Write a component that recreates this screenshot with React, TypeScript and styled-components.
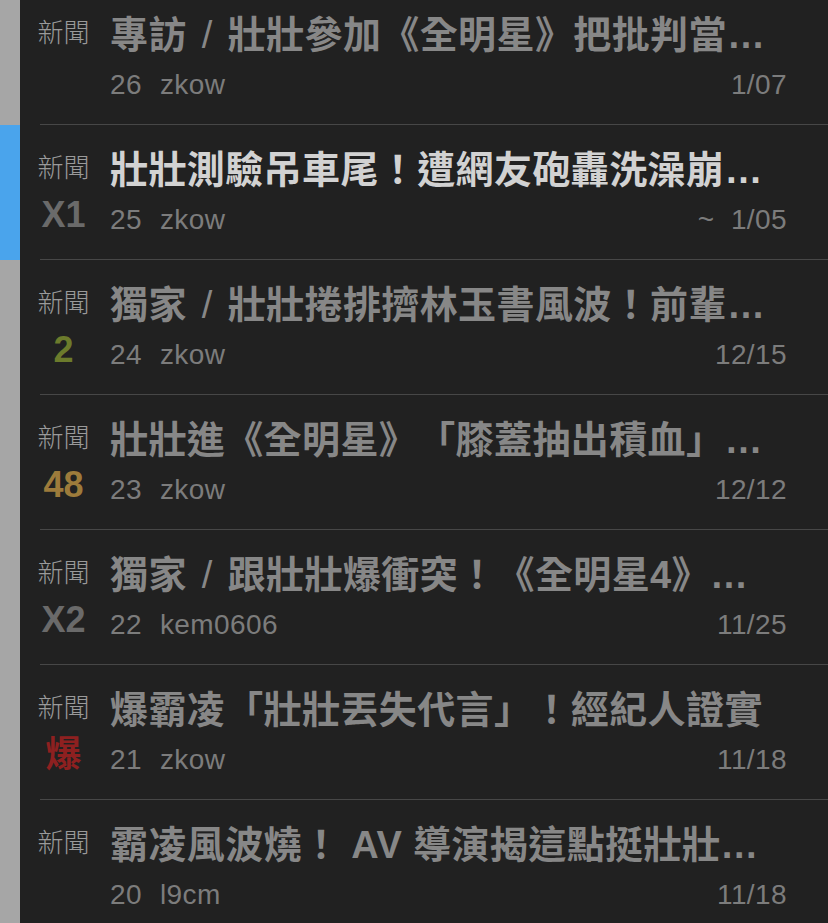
import React from "react";
import styled, { createGlobalStyle } from "styled-components";

const GlobalStyle = createGlobalStyle`
  html, body {
    margin: 0;
    padding: 0;
    background: #212121;
    overflow: hidden;
    height: 100%;
  }
`;

type Tone = "gray" | "green" | "gold" | "red";

interface Post {
  title: string;
  num: string;
  author: string;
  date: string;
  badge?: { text: string; tone: Tone };
  active?: boolean;
  bright?: boolean;
}

const posts: Post[] = [
  { title: "專訪 / 壯壯參加《全明星》把批判當…", num: "26", author: "zkow", date: "1/07" },
  {
    title: "壯壯測驗吊車尾！遭網友砲轟洗澡崩…",
    num: "25",
    author: "zkow",
    date: "~  1/05",
    badge: { text: "X1", tone: "gray" },
    active: true,
    bright: true,
  },
  { title: "獨家 / 壯壯捲排擠林玉書風波！前輩…", num: "24", author: "zkow", date: "12/15", badge: { text: "2", tone: "green" } },
  { title: "壯壯進《全明星》「膝蓋抽出積血」…", num: "23", author: "zkow", date: "12/12", badge: { text: "48", tone: "gold" } },
  { title: "獨家 / 跟壯壯爆衝突！《全明星4》…", num: "22", author: "kem0606", date: "11/25", badge: { text: "X2", tone: "gray" } },
  { title: "爆霸凌「壯壯丟失代言」！經紀人證實", num: "21", author: "zkow", date: "11/18", badge: { text: "爆", tone: "red" } },
  { title: "霸凌風波燒！ AV 導演揭這點挺壯壯…", num: "20", author: "l9cm", date: "11/18" },
];

const toneColor: Record<Tone, string> = {
  gray: "#6a6a6a",
  green: "#6c7b2c",
  gold: "#9d7b3b",
  red: "#8e2020",
};

const List = styled.div`
  margin-top: -10px;
  display: flex;
  flex-direction: column;
`;

const Item = styled.div`
  display: flex;
`;

const Strip = styled.div<{ $active?: boolean }>`
  width: 20px;
  flex: none;
  background: ${(p) => (p.$active ? "#4aa4ec" : "#a6a6a6")};
`;

const Body = styled.div`
  flex: 1;
  min-width: 0;
`;

const Row = styled.div`
  height: 134px;
  box-sizing: border-box;
  display: grid;
  grid-template-columns: 87px 1fr;
  column-gap: 3px;
  padding: 22px 41px 0 0;
`;

const Divider = styled.div`
  height: 1px;
  margin-left: 20px;
  background: #474747;
`;

const Side = styled.div`
  display: flex;
  flex-direction: column;
  align-items: center;
  padding-top: 4px;
`;

const Label = styled.div`
  font-family: "Noto Sans CJK TC", sans-serif;
  font-size: 26px;
  line-height: 30px;
  color: #9a9a9a;
  font-weight: 300;
`;

const Badge = styled.div<{ $tone: Tone }>`
  margin-top: 14px;
  font-family: "Liberation Sans", "Noto Sans CJK TC", sans-serif;
  font-size: 36px;
  line-height: 40px;
  font-weight: 700;
  color: ${(p) => toneColor[p.$tone]};
`;

const Main = styled.div`
  min-width: 0;
  display: flex;
  flex-direction: column;
`;

const Title = styled.div<{ $bright?: boolean }>`
  font-family: "Liberation Sans", "Noto Sans CJK TC", sans-serif;
  font-size: 38px;
  line-height: 46px;
  font-weight: 700;
  letter-spacing: 0.4px;
  text-spacing-trim: space-all;
  color: ${(p) => (p.$bright ? "#d2d2d2" : "#878787")};
  white-space: nowrap;
  overflow: hidden;
  text-overflow: ellipsis;
`;

const Slash = styled.span`
  font-weight: 400;
  margin: 0 4px;
`;

const Meta = styled.div`
  margin-top: 10px;
  display: flex;
  align-items: center;
  font-family: "Liberation Sans", sans-serif;
  font-size: 28px;
  line-height: 34px;
  letter-spacing: 0.4px;
  color: #7c7c7c;
`;

const Num = styled.span`
  margin-right: 18px;
`;

const Author = styled.span`
  flex: 1;
`;

const DateText = styled.span`
  white-space: pre;
`;

function TitleText({ text }: { text: string }) {
  const parts = text.split(" / ");
  return (
    <>
      {parts.map((part, i) => (
        <React.Fragment key={i}>
          {i > 0 && <Slash> / </Slash>}
          {part}
        </React.Fragment>
      ))}
    </>
  );
}

export default function App() {
  return (
    <>
      <GlobalStyle />
      <List>
        {posts.map((p, i) => (
          <Item key={i}>
            <Strip $active={p.active} />
            <Body>
              <Row>
                <Side>
                  <Label>新聞</Label>
                  {p.badge && <Badge $tone={p.badge.tone}>{p.badge.text}</Badge>}
                </Side>
                <Main>
                  <Title $bright={p.bright}>
                    <TitleText text={p.title} />
                  </Title>
                  <Meta>
                    <Num>{p.num}</Num>
                    <Author>{p.author}</Author>
                    <DateText>{p.date}</DateText>
                  </Meta>
                </Main>
              </Row>
              <Divider />
            </Body>
          </Item>
        ))}
      </List>
    </>
  );
}
